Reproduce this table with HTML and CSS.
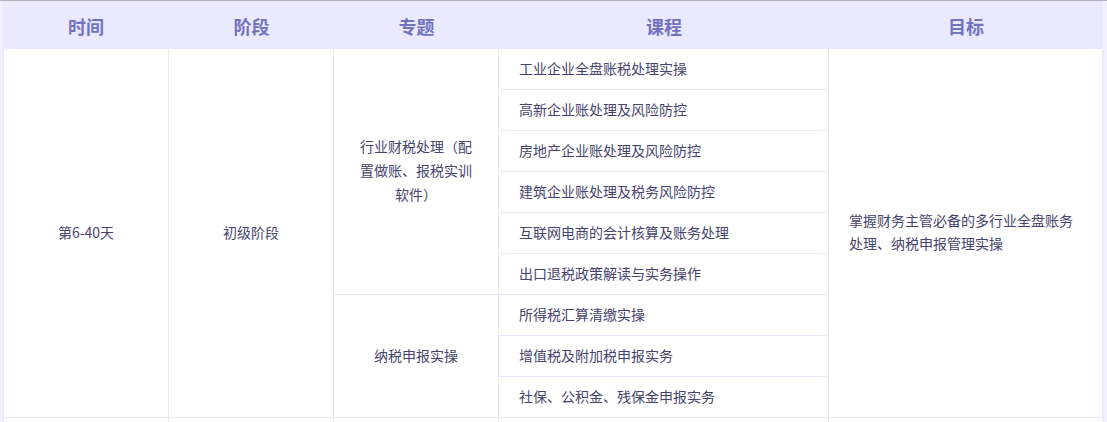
FILE: index.html
```html
<!DOCTYPE html>
<html lang="zh-CN">
<head>
<meta charset="utf-8">
<title>课程安排</title>
<link rel="stylesheet" href="styles.css">
</head>
<body>
<div class="wrap">
  <div class="grid">
    <div class="th">时间</div>
    <div class="th">阶段</div>
    <div class="th">专题</div>
    <div class="th">课程</div>
    <div class="th">目标</div>

    <div class="td center time">第6-40天</div>
    <div class="td center stage">初级阶段</div>
    <div class="td center topic topic1">行业财税处理（配置做账、报税实训软件）</div>
    <div class="td course">工业企业全盘账税处理实操</div>
    <div class="td goal">掌握财务主管必备的多行业全盘账务处理、纳税申报管理实操</div>
    <div class="td course">高新企业账处理及风险防控</div>
    <div class="td course">房地产企业账处理及风险防控</div>
    <div class="td course">建筑企业账处理及税务风险防控</div>
    <div class="td course">互联网电商的会计核算及账务处理</div>
    <div class="td course">出口退税政策解读与实务操作</div>
    <div class="td center topic topic2">纳税申报实操</div>
    <div class="td course">所得税汇算清缴实操</div>
    <div class="td course">增值税及附加税申报实务</div>
    <div class="td course">社保、公积金、残保金申报实务</div>

    <div class="td next"></div>
    <div class="td next"></div>
    <div class="td next"></div>
    <div class="td next"></div>
    <div class="td next"></div>
  </div>
</div>
</body>
</html>
```

FILE: styles.css
```css
html, body {
  margin: 0;
  padding: 0;
}

body {
  background: #f2f0fe;
  border-top: 1px solid #b4b2b8;
  font-family: "Noto Sans CJK SC", "Noto Sans", sans-serif;
  color: #46446e;
  font-size: 14px;
  overflow: hidden;
  height: 421px;
}

.wrap {
  padding-left: 3px;
}

.grid {
  display: grid;
  width: 1099px;
  border-left: 1px solid #e9e6fa;
  grid-template-columns: 165px 165px 165px 330px 274px;
  grid-template-rows: 48px repeat(9, 41px) 4px;
  background: #ffffff;
}

.th {
  background: #ebe9fd;
  color: #7272c2;
  font-weight: 700;
  font-size: 18px;
  display: flex;
  align-items: center;
  justify-content: center;
  padding-top: 1px;
}

.grid > .th:first-child {
  margin-left: -1px;
}

.td {
  box-sizing: border-box;
  border-right: 1px solid #e9e6fa;
  border-bottom: 1px solid #e9e6fa;
  display: flex;
  align-items: center;
  padding-bottom: 3px;
}

.next {
  border-bottom: none;
  padding-bottom: 0;
}

.center {
  justify-content: center;
  text-align: center;
  padding-left: 20px;
  padding-right: 20px;
}

.time {
  grid-column: 1;
  grid-row: 2 / span 9;
}

.stage {
  grid-column: 2;
  grid-row: 2 / span 9;
}

.topic {
  grid-column: 3;
  line-height: 24px;
}

.topic1 {
  grid-row: 2 / span 6;
}

.topic2 {
  grid-row: 8 / span 3;
}

.course {
  grid-column: 4;
  padding-left: 20px;
}

.goal {
  grid-column: 5;
  grid-row: 2 / span 9;
  padding-left: 20px;
  padding-right: 20px;
  line-height: 23px;
}
```
